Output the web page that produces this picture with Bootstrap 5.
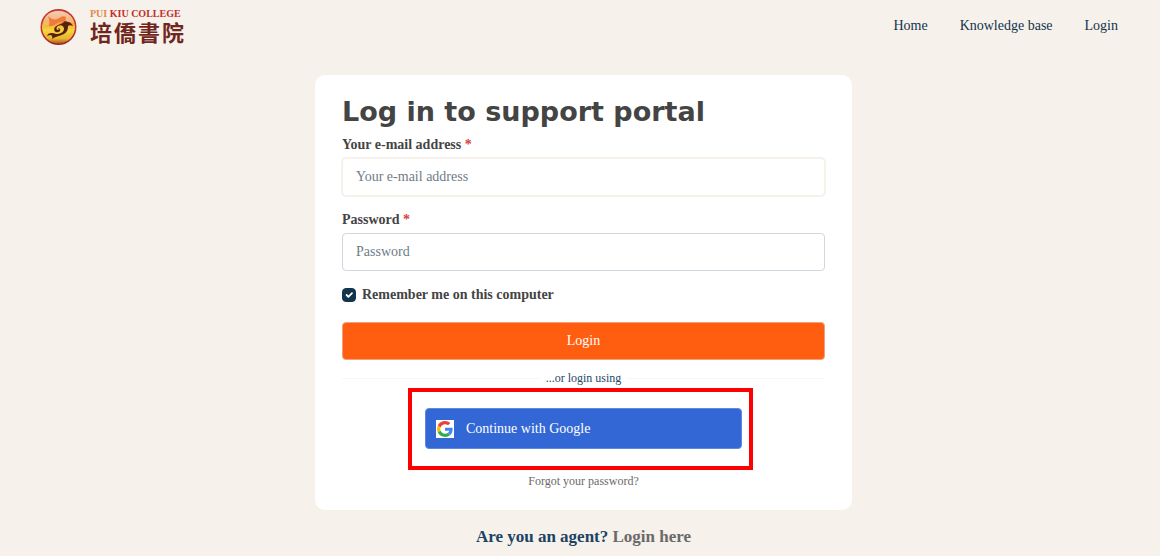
<!DOCTYPE html>
<html lang="en">
<head>
<meta charset="utf-8">
<meta name="viewport" content="width=device-width, initial-scale=1">
<title>Log in to support portal</title>
<link href="https://cdn.jsdelivr.net/npm/bootstrap@5.3.0/dist/css/bootstrap.min.css" rel="stylesheet">
<style>
  html { background: #fff; }
  body { background: none; color: #444; font-family: "Liberation Serif", serif; font-size: 14px; line-height: 20px; }
  .page { background: #f6f1eb; min-height: calc(100vh - 2px); }
  .site-header { padding: 8px 42px 0 40px; }
  .brand-en { font-size: 10px; line-height: 12px; font-weight: 700; color: #c0302a; }
  .brand-en span { color: #df8a4e; }
  .brand-zh { font-family: "Liberation Serif", "Noto Sans CJK TC", serif; font-size: 22px; line-height: 28px; font-weight: 700; color: #70261c; gap: 2px; }
  .site-nav { gap: 32px; padding-top: 8px; }
  .site-nav a { color: #12344d; text-decoration: none; }
  main { padding-left: 7px; }
  .login-card { width: 100%; max-width: 537px; margin-top: 27px; padding: 19px 27px 21px; background: #fff; border-radius: 10px; }
  .login-card h1 { font-family: "DejaVu Sans", sans-serif; font-size: 27px; line-height: 36px; font-weight: 700; color: #444; margin: 0 0 5px; }
  .login-card label { font-weight: 700; display: block; }
  .login-card label b { color: #d93f42; }
  .login-card .form-control { height: 38px; padding: 8px 13px; font-size: 14px; line-height: 20px; border: 1px solid #cfd7df; border-radius: 4px; margin: 3px 0 14px; box-shadow: none; }
  .login-card .form-control::placeholder { color: #6f7c87; }
  .login-card .form-control.is-current { border-color: #f6f1eb; box-shadow: 0 0 0 1px #f6f1eb; }
  .login-card .form-check-input { width: 14px; height: 14px; margin: 0; border-radius: 4px; border-color: #12344d; background-color: #12344d; background-size: 12px; }
  .remember-row { gap: 6px; }
  .btn-login { height: 38px; background: #ff5e10; border: 1px solid #f0a27c; border-radius: 4px; color: #fff; font-size: 14px; line-height: 20px; padding: 0; margin-top: 17px; }
  .or-line { font-size: 12px; line-height: 16px; color: #264966; gap: 5px; margin-top: 10px; }
  .or-line::before, .or-line::after { content: ""; flex: 1; border-top: 1px solid #f7f7f7; }
  .callout-box { width: 345px; max-width: 100%; border: 4px solid #f00; padding: 16px 7px 17px 13px; margin: 2px 6px 0 0; }
  .btn-google { height: 41px; width: 100%; background: #3367d6; border: 1px solid #5f88df; border-radius: 4px; color: #fff; font-size: 14px; line-height: 20px; padding: 0 10px; gap: 12px; }
  .forgot { font-size: 12px; line-height: 16px; color: #6a6a6a; text-decoration: none; margin-top: 3px; }
  .agent { font-size: 17px; line-height: 24px; font-weight: 700; color: #1d4363; margin: 15px 0 0; }
  .agent a { color: #6a6a6a; text-decoration: none; }
</style>
</head>
<body>
<div class="page">
<header class="site-header d-flex justify-content-between align-items-start">
  <a href="#" class="d-flex gap-2 text-decoration-none">
    <svg width="38" height="38" viewBox="0 0 38 38" aria-hidden="true">
      <defs>
        <linearGradient id="rim" x2="0" y2="1"><stop stop-color="#c0323a"/><stop offset=".5" stop-color="#c8382b"/><stop offset="1" stop-color="#a02032"/></linearGradient>
        <linearGradient id="orb" x2="0" y2="1"><stop stop-color="#e0723a"/><stop offset=".35" stop-color="#f0a03c"/><stop offset=".6" stop-color="#f6d53e"/><stop offset=".85" stop-color="#e9b52c"/><stop offset="1" stop-color="#a85a1d"/></linearGradient>
        <linearGradient id="shine" x2="0" y2="1"><stop stop-color="#fff" stop-opacity=".65"/><stop offset="1" stop-color="#fff" stop-opacity=".12"/></linearGradient>
      </defs>
      <circle cx="18.500" cy="19" r="18" fill="url(#rim)"/>
      <circle cx="18.500" cy="19" r="16.500" fill="url(#orb)"/>
      <path d="M3 18C3 8 10 3 18 3c9 0 15 5 16 12-10-3-20 0-31 3z" fill="url(#shine)"/>
      <path d="M8 8c3 3 6 4 9 3s6-4 9-2l-1 6c-3-2-7-1-9 1-4 3-7 2-7 2 1-4 0-7-1-10z" fill="#f07a3c"/>
      <path d="M23 15c1-2 3-2 5-1 2 0 4 2 5 4-2-1-4-1-5 0 0 4-1 6-4 8-4 2-8 2-12 5 1-2 0-4-2-4l-3 1c2-4 6-3 9-2 4 0 8-2 8-5s-3-5-6-3c-2 1-2 4 0 4 1 0 1-1 0-2 3 0 3 4 0 4-3 1-5-2-3-5 2-2 5-3 8-4z" fill="#562010"/>
    </svg>
    <span class="d-flex flex-column ps-1">
      <span class="brand-en"><span>PUI</span> KIU COLLEGE</span>
      <span class="brand-zh d-flex" lang="zh-Hant"><span>培</span><span>僑</span><span>書</span><span>院</span></span>
    </span>
  </a>
  <nav class="site-nav d-flex" aria-label="Main">
    <a href="#">Home</a>
    <a href="#">Knowledge base</a>
    <a href="#">Login</a>
  </nav>
</header>
<main class="d-flex flex-column align-items-center">
  <form class="login-card d-flex flex-column">
    <h1>Log in to support portal</h1>
    <label for="email">Your e-mail address <b>*</b></label>
    <input id="email" type="email" class="form-control is-current" placeholder="Your e-mail address">
    <label for="password">Password <b>*</b></label>
    <input id="password" type="password" class="form-control" placeholder="Password">
    <div class="remember-row d-flex align-items-center">
      <input id="remember" type="checkbox" class="form-check-input" checked>
      <label for="remember">Remember me on this computer</label>
    </div>
    <button type="submit" class="btn btn-login w-100">Login</button>
    <div class="or-line d-flex align-items-center">...or login using</div>
    <div class="callout-box align-self-center">
      <button type="button" class="btn btn-google d-flex align-items-center">
        <svg width="18" height="18" viewBox="-3 -3 54 54" aria-hidden="true">
          <path fill="#fff" d="M-3-3h54v54H-3z"/>
          <path fill="#ea4335" d="M24 9.500c3.540 0 6.710 1.220 9.210 3.600l6.850-6.850C35.900 2.380 30.470 0 24 0 14.620 0 6.510 5.380 2.560 13.220l7.980 6.190C12.430 13.720 17.740 9.500 24 9.500z"/>
          <path fill="#4285f4" d="M46.980 24.550c0-1.570-.15-3.090-.38-4.550H24v9.020h12.940c-.58 2.960-2.260 5.480-4.780 7.180l7.730 6c4.510-4.180 7.090-10.360 7.090-17.650z"/>
          <path fill="#fbbc05" d="M10.530 28.590c-.48-1.450-.76-2.990-.76-4.590s.27-3.140.76-4.590l-7.980-6.190C.92 16.460 0 20.120 0 24c0 3.880.92 7.540 2.560 10.780l7.970-6.190z"/>
          <path fill="#34a853" d="M24 48c6.480 0 11.930-2.130 15.890-5.810l-7.730-6c-2.150 1.450-4.920 2.300-8.160 2.300-6.260 0-11.570-4.220-13.470-9.910l-7.980 6.190C6.510 42.620 14.620 48 24 48z"/>
        </svg>
        Continue with Google
      </button>
    </div>
    <a href="#" class="forgot align-self-center">Forgot your password?</a>
  </form>
  <p class="agent">Are you an agent? <a href="#">Login here</a></p>
</main>
</div>
<script src="https://cdn.jsdelivr.net/npm/bootstrap@5.3.0/dist/js/bootstrap.bundle.min.js"></script>
</body>
</html>
